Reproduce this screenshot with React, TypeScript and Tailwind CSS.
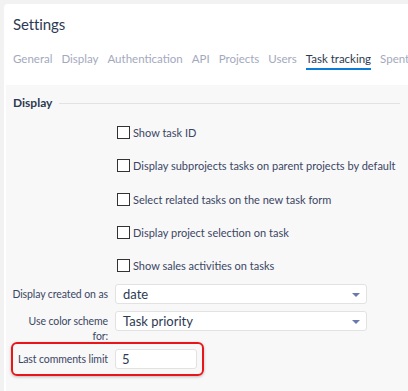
import { ReactNode } from 'react';

const tabs = ['General', 'Display', 'Authentication', 'API', 'Projects', 'Users', 'Task tracking', 'Spent time'];

const checks = [
  'Show task ID',
  'Display subprojects tasks on parent projects by default',
  'Select related tasks on the new task form',
  'Display project selection on task',
  'Show sales activities on tasks',
];

function Caret() {
  return (
    <svg width="8" height="5" viewBox="0 0 8 5" className="absolute right-[6px] top-[8px]">
      <path d="M0 0H8L4 4Z" fill="#6a78b0" />
    </svg>
  );
}

function Row({ label, children }: { label: ReactNode; children: ReactNode }) {
  return (
    <div className="flex items-start">
      <div className="flex w-[102px] shrink-0 justify-end whitespace-nowrap pt-[3px] text-right text-[10.5px] leading-[15px] tracking-[-0.1px] text-[#3b4664]">
        <div>{label}</div>
      </div>
      <div className="ml-[7px]">{children}</div>
    </div>
  );
}

export default function App() {
  return (
    <div className="h-[391px] w-[408px] overflow-hidden bg-[#f2f2f2] pl-[4px] pt-[4px]" style={{ fontFamily: 'Lato, "Noto Sans", sans-serif' }}>
      <div className="h-[400px] w-[420px] rounded-tl-[4px] bg-white">
        <div className="px-[9px] pt-[9px] text-[15px] leading-[22px] tracking-[-0.1px] text-[#2d3a52]">Settings</div>
        <div className="mt-[16px] flex gap-[9px] whitespace-nowrap px-[9px] text-[11.5px] leading-[16px] text-[#a3a9bd]">
          {tabs.map((t) => (
            <div key={t} className={t === 'Task tracking' ? 'border-b-2 border-[#0a7bd6] pb-[1px] text-[#2d3a52]' : 'pb-[1px]'}>
              {t}
            </div>
          ))}
        </div>
        <div className="ml-[2px] mt-[15px] h-[320px] bg-[#f8f8f8]">
          <div className="flex items-center pl-[7px] pt-[10px]">
            <div className="text-[12px] font-bold leading-[16px] text-[#2d3a52]">Display</div>
            <div className="ml-[7px] h-px w-[341px] bg-[#e2e2e2]" />
          </div>
          <div className="mt-[15px] pl-[111px]">
            {checks.map((c) => (
              <div key={c} className="flex h-[33.3px] items-start">
                <div className="h-[13px] w-[13px] shrink-0 border border-[#333] bg-white" />
                <div className="ml-[3px] text-[11px] leading-[13px] text-[#3b4664]">{c}</div>
              </div>
            ))}
          </div>
          <div className="mt-[-8px] flex flex-col gap-[7px]">
            <Row label="Display created on as">
              <div className="relative h-[20px] w-[252px] rounded-[3px] border border-[#e2e2e2] bg-white pl-[7px] text-[13px] leading-[18px] text-[#2d3a52]">
                date
                <Caret />
              </div>
            </Row>
            <Row label={<>Use color scheme<br />for:</>}>
              <div className="relative h-[20px] w-[252px] rounded-[3px] border border-[#e2e2e2] bg-white pl-[7px] text-[13px] leading-[18px] text-[#2d3a52]">
                Task priority
                <Caret />
              </div>
            </Row>
          </div>
          <div className="ml-[5px] mt-[-2px] w-[193px] rounded-[6px] border-2 border-[#e8161b] py-[5px] shadow-[0_1px_3px_rgba(0,0,0,0.25)]">
            <div className="flex items-center">
              <div className="flex w-[95px] shrink-0 justify-end whitespace-nowrap text-[10.5px] leading-[15px] tracking-[-0.1px] text-[#3b4664]">
                <div>Last comments limit</div>
              </div>
              <div className="ml-[7px] h-[20px] w-[82px] rounded-[3px] border border-[#e2e2e2] bg-white pl-[6px] text-[13px] leading-[18px] text-[#2d3a52]">5</div>
            </div>
          </div>
        </div>
      </div>
    </div>
  );
}
